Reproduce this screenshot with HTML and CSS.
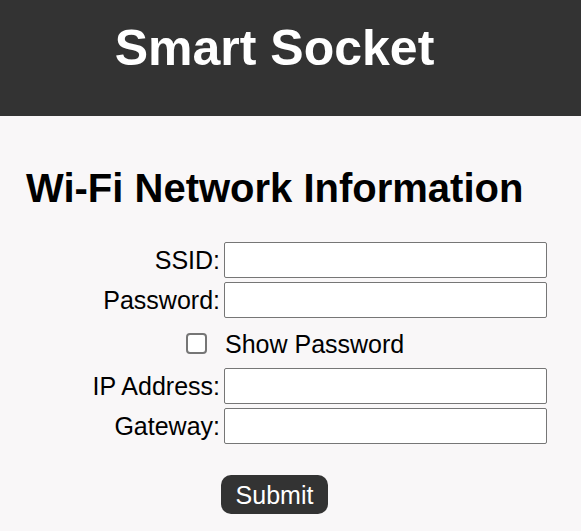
FILE: index.html
```html
<!DOCTYPE html>
<html lang="en">
<head>
<meta charset="utf-8">
<title>Smart Socket</title>
<link rel="stylesheet" href="styles.css">
</head>
<body>
<header class="header">
  <div class="wrap">
    <h1 class="title">Smart Socket</h1>
  </div>
</header>
<main class="main wrap">
  <h2 class="heading">Wi-Fi Network Information</h2>
  <form class="form">
    <div class="grid">
      <label class="label" for="ssid">SSID:</label>
      <input class="field" type="text" id="ssid">
      <label class="label" for="pw">Password:</label>
      <input class="field" type="password" id="pw">
      <input class="check" type="checkbox" id="show">
      <label class="check-label" for="show">Show Password</label>
      <label class="label" for="ip">IP Address:</label>
      <input class="field" type="text" id="ip">
      <label class="label" for="gw">Gateway:</label>
      <input class="field" type="text" id="gw">
    </div>
    <div class="actions">
      <button class="submit" type="submit">Submit</button>
    </div>
  </form>
</main>
</body>
</html>
```
FILE: styles.css
```css
html, body {
  margin: 0;
  padding: 0;
}
body {
  background: #f9f7f8;
  font-family: "Liberation Sans", Arial, sans-serif;
  color: #000;
}
.wrap {
  width: 549px;
}
.header {
  background: #333333;
  height: 116px;
  box-sizing: border-box;
  padding-top: 20px;
}
.title {
  margin: 0;
  text-align: center;
  color: #fff;
  font-size: 50px;
  font-weight: bold;
  line-height: 57px;
}
.main {
  padding-top: 50px;
}
.heading {
  margin: 0 0 0 26px;
  font-size: 40px;
  font-weight: bold;
  line-height: 45px;
}
.form {
  margin-top: 31px;
}
.grid {
  display: grid;
  grid-template-columns: 220px 323px;
  grid-template-rows: 36px 36px 42px 36px 36px;
  column-gap: 4px;
  row-gap: 4px;
}
.label {
  font-size: 25px;
  text-align: right;
  align-self: center;
  line-height: 28px;
}
.field {
  box-sizing: border-box;
  height: 36px;
  width: 323px;
  margin: 0;
  border: 1px solid #767676;
  border-radius: 2px;
  background: #fff;
  font-size: 24px;
  font-family: inherit;
  padding: 1px 4px;
}
.check {
  appearance: none;
  -webkit-appearance: none;
  box-sizing: border-box;
  width: 21px;
  height: 21px;
  margin: 0 13px 0 0;
  border: 2px solid #767676;
  border-radius: 4px;
  background: #fff;
  justify-self: end;
  align-self: center;
}
.check-label {
  font-size: 25px;
  line-height: 28px;
  align-self: center;
  padding-left: 1px;
  transform: translateY(1px);
}
.actions {
  display: flex;
  justify-content: center;
  margin-top: 31px;
}
.submit {
  height: 39px;
  padding: 0 15px;
  margin: 0;
  border: none;
  border-radius: 10px;
  background: #333333;
  color: #fff;
  font-family: inherit;
  font-size: 25px;
  line-height: 28px;
}
```
